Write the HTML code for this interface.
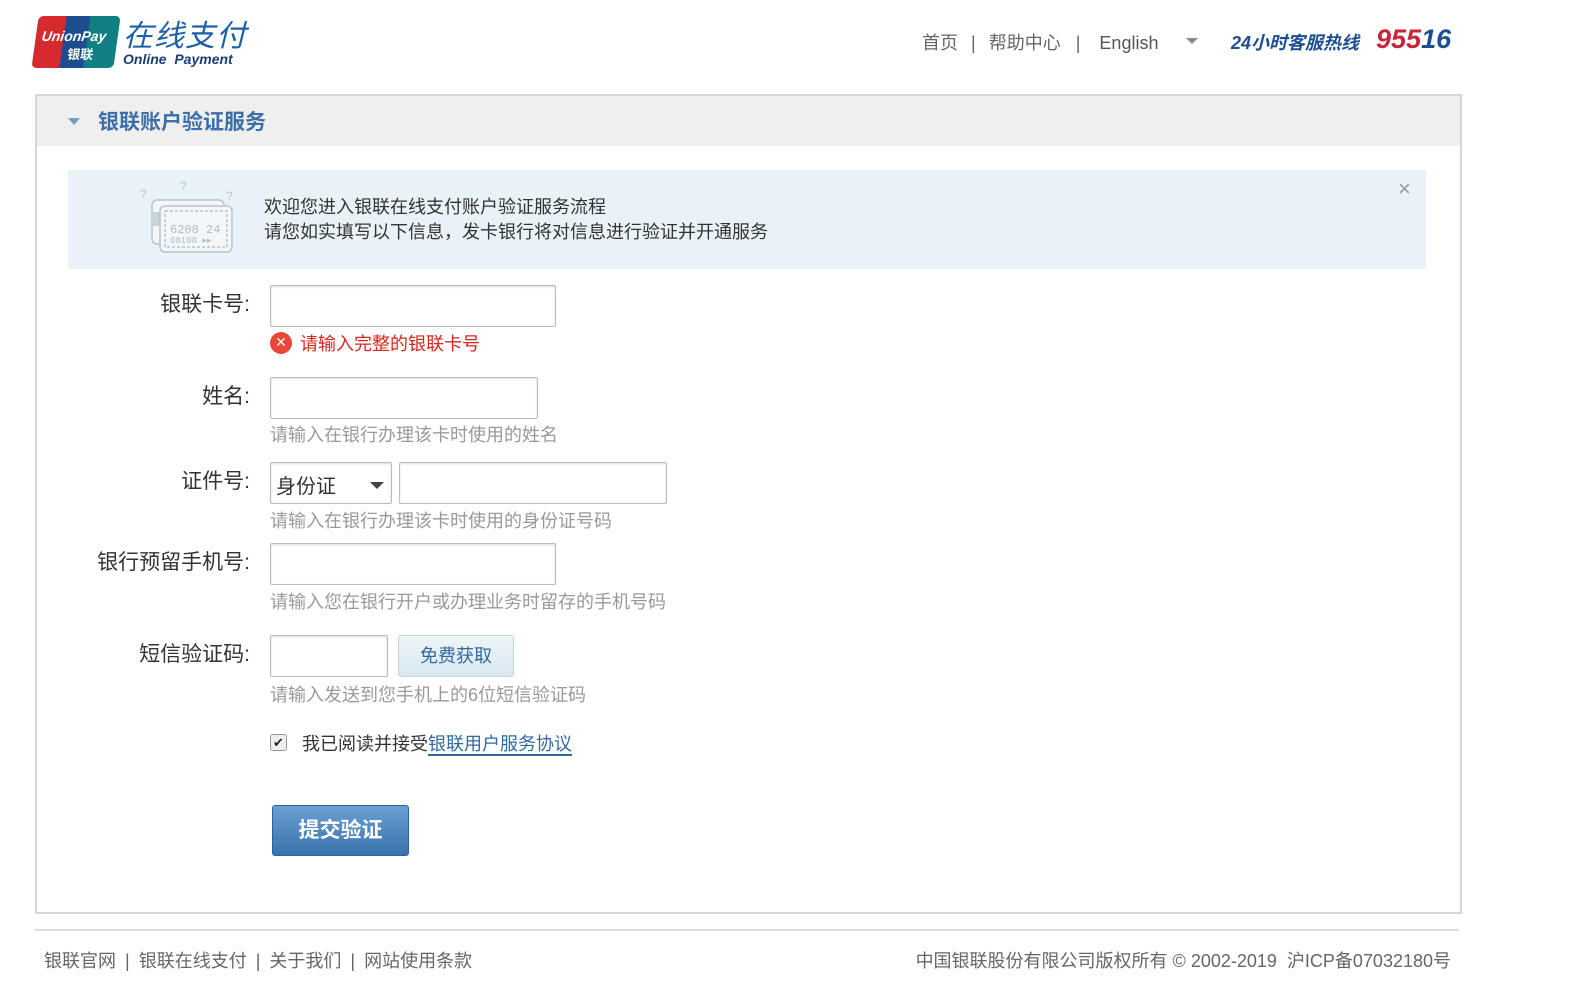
<!DOCTYPE html>
<html><head><meta charset="utf-8"><style>
body{margin:0;width:1569px;height:997px;background:#fff;font-family:"Liberation Sans","Noto Sans CJK SC",sans-serif;position:relative;overflow:hidden}
.a{position:absolute}
.lbl{position:absolute;right:1319px;font-size:21px;color:#333;white-space:nowrap}
.inp{position:absolute;border:1px solid #bbb;border-radius:2px;box-shadow:inset 0 1px 2px #ddd;background:#fff;box-sizing:border-box}
.hint{position:absolute;left:270px;font-size:18px;color:#999;white-space:nowrap}
</style></head><body>
<!-- logo -->
<div class="a" style="left:35px;top:16px;width:82px;height:52px;border-radius:5px;overflow:hidden;transform:skewX(-8deg)">
<div class="a" style="left:0;top:0;width:34px;height:52px;background:#d52b2e"></div>
<div class="a" style="left:28px;top:0;width:30px;height:52px;background:#1c4d8e"></div>
<div class="a" style="left:52px;top:0;width:32px;height:52px;background:#0f7f83"></div>
<div class="a" style="left:6px;top:12px;color:#fff;font-weight:bold;font-style:italic;font-size:14px;white-space:nowrap">UnionPay</div>
<div class="a" style="left:34px;top:28px;color:#fff;font-weight:bold;font-size:13px">银联</div>
</div>
<div class="a" style="left:123px;top:11px;color:#1d5fa8;font-size:30px;font-style:italic;letter-spacing:1px">在线支付</div>
<div class="a" style="left:123px;top:51px;color:#1a3e72;font-size:14px;font-weight:bold;font-style:italic">Online&nbsp; Payment</div>
<!-- header right -->
<div class="a" style="left:922px;top:29px;font-size:18px;color:#666;white-space:nowrap">首页 <span style="margin:0 8px">|</span> 帮助中心 <span style="margin:0 14px 0 10px">|</span> <span style="color:#555">English</span></div>
<div class="a" style="left:1186px;top:38px;border:6px solid transparent;border-top:6px solid #888;"></div>
<div class="a" style="left:1231px;top:29px;font-size:18px;color:#1d4f8f;font-style:italic;font-weight:bold;white-space:nowrap">24小时客服热线</div>
<div class="a" style="left:1376px;top:24px;font-size:27px;color:#c8243a;font-style:italic;font-weight:bold">955<span style="color:#1d4f8f">16</span></div>
<!-- box -->
<div class="a" style="left:35px;top:94px;width:1423px;height:816px;border:2px solid #d6d6d6"></div>
<div class="a" style="left:37px;top:96px;width:1423px;height:50px;background:#efefef"></div>
<div class="a" style="left:68px;top:118px;border:6px solid transparent;border-top:7px solid #7a9cc0"></div>
<div class="a" style="left:98px;top:106px;font-size:21px;font-weight:bold;color:#3c6ea8">银联账户验证服务</div>
<!-- banner -->
<div class="a" style="left:68px;top:170px;width:1358px;height:99px;background:#e9f2f6"></div>
<svg class="a" style="left:138px;top:178px" width="100" height="80" viewBox="0 0 100 80" fill="none" stroke="#b8c4cc" stroke-width="1.5">
<rect x="14" y="22" width="72" height="44" rx="5" fill="#f4f7f9"/><rect x="14" y="34" width="10" height="14" fill="#c8d3da" stroke="none"/>
<rect x="22" y="28" width="72" height="46" rx="5" fill="#f4f7f9"/><rect x="27" y="33" width="62" height="36" stroke-dasharray="3 2"/>
<text x="32" y="55" font-size="12" fill="#b0bcc4" stroke="none" font-family="Liberation Mono">6208 24</text>
<text x="32" y="65" font-size="9" fill="#b0bcc4" stroke="none" font-family="Liberation Mono">08108 ▸▸</text>
<text x="2" y="20" font-size="12" fill="#b8c4cc" stroke="none">?</text><text x="42" y="12" font-size="12" fill="#b8c4cc" stroke="none">?</text><text x="88" y="22" font-size="12" fill="#b8c4cc" stroke="none">?</text>
</svg>
<div class="a" style="left:264px;top:195px;font-size:18px;color:#333;line-height:25px">欢迎您进入银联在线支付账户验证服务流程<br>请您如实填写以下信息，发卡银行将对信息进行验证并开通服务</div>
<div class="a" style="left:1398px;top:176px;font-size:22px;color:#999">×</div>
<!-- form -->
<div class="lbl" style="top:288px">银联卡号:</div>
<div class="inp" style="left:270px;top:285px;width:286px;height:42px"></div>
<div class="a" style="left:270px;top:332px;width:22px;height:22px;border-radius:50%;background:#e8473a;color:#fff;font-size:18px;line-height:21px;text-align:center">×</div>
<div class="a" style="left:300px;top:330px;font-size:18px;color:#d9261c">请输入完整的银联卡号</div>
<div class="lbl" style="top:380px">姓名:</div>
<div class="inp" style="left:270px;top:377px;width:268px;height:42px"></div>
<div class="hint" style="top:421px">请输入在银行办理该卡时使用的姓名</div>
<div class="lbl" style="top:465px">证件号:</div>
<div class="inp" style="left:270px;top:462px;width:122px;height:42px;font-size:20px;color:#333;padding:7px 5px">身份证</div>
<div class="a" style="left:370px;top:482px;border:7px solid transparent;border-top:7px solid #444"></div>
<div class="inp" style="left:399px;top:462px;width:268px;height:42px"></div>
<div class="hint" style="top:507px">请输入在银行办理该卡时使用的身份证号码</div>
<div class="lbl" style="top:546px">银行预留手机号:</div>
<div class="inp" style="left:270px;top:543px;width:286px;height:42px"></div>
<div class="hint" style="top:588px">请输入您在银行开户或办理业务时留存的手机号码</div>
<div class="lbl" style="top:638px">短信验证码:</div>
<div class="inp" style="left:270px;top:635px;width:118px;height:42px"></div>
<div class="a" style="left:398px;top:635px;width:116px;height:42px;box-sizing:border-box;border:1px solid #c3d6e0;border-radius:3px;background:linear-gradient(#eef5f8,#d8e8ef);color:#2f6aa0;font-size:18px;text-align:center;line-height:40px">免费获取</div>
<div class="hint" style="top:681px">请输入发送到您手机上的6位短信验证码</div>
<div class="a" style="left:270px;top:734px;width:15px;height:15px;border:1px solid #999;border-radius:3px;background:#eee;font-size:13px;line-height:15px;text-align:center;color:#222">✔</div>
<div class="a" style="left:302px;top:730px;font-size:18px;color:#333;white-space:nowrap">我已阅读并接受<span style="color:#2f6aa0;border-bottom:2px solid #2f6aa0">银联用户服务协议</span></div>
<div class="a" style="left:272px;top:805px;width:137px;height:51px;box-sizing:border-box;border:1px solid #2d6398;border-radius:3px;background:linear-gradient(#6aa0d4,#3a72ad);color:#fff;font-size:21px;font-weight:bold;text-align:center;line-height:49px">提交验证</div>
<!-- footer -->
<div class="a" style="left:35px;top:929px;width:1424px;height:2px;background:#ddd"></div>
<div class="a" style="left:44px;top:947px;font-size:18px;color:#666;white-space:nowrap">银联官网 <span style="margin:0 4px">|</span> 银联在线支付 <span style="margin:0 4px">|</span> 关于我们 <span style="margin:0 4px">|</span> 网站使用条款</div>
<div class="a" style="right:118px;top:947px;font-size:18px;color:#666;white-space:nowrap">中国银联股份有限公司版权所有 © 2002-2019 &nbsp;沪ICP备07032180号</div>
</body></html>
